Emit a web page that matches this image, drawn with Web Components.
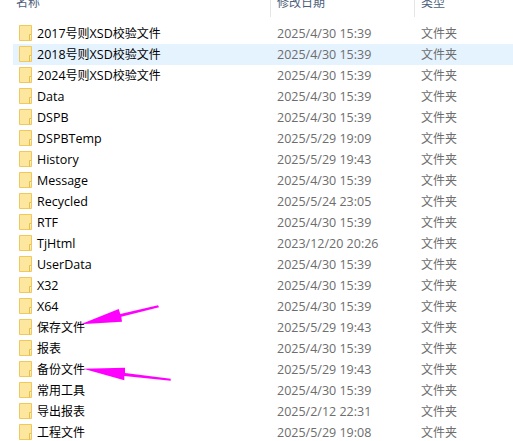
<!DOCTYPE html>
<html lang="zh">
<head>
<meta charset="utf-8">
<title>文件夹</title>
<style>
  html, body { margin: 0; padding: 0; background: #fff; overflow: hidden; }
  body { width: 513px; height: 441px; font-family: "Open Sans", "Noto Sans CJK SC", sans-serif; }
</style>
</head>
<body>
<file-list>
  <list-header></list-header>
  <folder-row name="2017号则XSD校验文件" date="2025/4/30 15:39"></folder-row>
  <folder-row name="2018号则XSD校验文件" date="2025/4/30 15:39" hot></folder-row>
  <folder-row name="2024号则XSD校验文件" date="2025/4/30 15:39"></folder-row>
  <folder-row name="Data" date="2025/4/30 15:39"></folder-row>
  <folder-row name="DSPB" date="2025/4/30 15:39"></folder-row>
  <folder-row name="DSPBTemp" date="2025/5/29 19:09"></folder-row>
  <folder-row name="History" date="2025/5/29 19:43"></folder-row>
  <folder-row name="Message" date="2025/4/30 15:39"></folder-row>
  <folder-row name="Recycled" date="2025/5/24 23:05"></folder-row>
  <folder-row name="RTF" date="2025/4/30 15:39"></folder-row>
  <folder-row name="TjHtml" date="2023/12/20 20:26"></folder-row>
  <folder-row name="UserData" date="2025/4/30 15:39"></folder-row>
  <folder-row name="X32" date="2025/4/30 15:39"></folder-row>
  <folder-row name="X64" date="2025/4/30 15:39"></folder-row>
  <folder-row name="保存文件" date="2025/5/29 19:43"></folder-row>
  <folder-row name="报表" date="2025/4/30 15:39"></folder-row>
  <folder-row name="备份文件" date="2025/5/29 19:43"></folder-row>
  <folder-row name="常用工具" date="2025/4/30 15:39"></folder-row>
  <folder-row name="导出报表" date="2025/2/12 22:31"></folder-row>
  <folder-row name="工程文件" date="2025/5/29 19:08"></folder-row>
  <arrow-marks></arrow-marks>
</file-list>

<script>
class FileList extends HTMLElement {
  constructor() {
    super();
    this.attachShadow({ mode: "open" }).innerHTML = `
      <style>
        :host { display: block; position: relative; height: 441px; overflow: hidden; }
      </style>
      <slot></slot>`;
  }
}

class ListHeader extends HTMLElement {
  constructor() {
    super();
    this.attachShadow({ mode: "open" }).innerHTML = `
      <style>
        :host {
          display: grid;
          grid-template-columns: 270px 144px 1fr;
          height: 17px;
          margin-bottom: 6px;
          overflow: hidden;
          color: #4c607a;
          font-size: 12px;
        }
        div { display: flex; align-items: flex-end; height: 17px; line-height: 16px; padding-bottom: 6px; box-sizing: border-box; padding-left: 6px; }
        div + div { border-left: 1px solid #e5e5e5; }
        .name { padding-left: 16px; }
      </style>
      <div class="name">名称</div><div>修改日期</div><div>类型</div>`;
  }
}

class FolderRow extends HTMLElement {
  constructor() {
    super();
    this.attachShadow({ mode: "open" }).innerHTML = `
      <style>
        :host {
          display: grid;
          grid-template-columns: 257px 144px 1fr;
          align-items: center;
          height: 21px;
          margin-left: 13px;
          font-size: 12px;
          line-height: 21px;
          white-space: nowrap;
        }
        :host([hot]) { background: #e5f3ff; }
        .name { display: flex; align-items: center; gap: 5px; padding-left: 6px; color: #000; }
        .date, .type { color: #6d6d6d; padding-left: 7px; }
        .date, .latin { font-size: 12.5px; }
        svg { display: block; flex: none; margin-top: -1px; }
      </style>
      <div class="name">
        <svg width="13" height="16" viewBox="0 0 13 16">
          <path d="M.5.500h12v15H.5z" fill="#fde79f" stroke="#f0c95c"/>
          <path d="M10.500 15.500v-6h2" fill="#fff3c8" stroke="#e6bd50"/>
        </svg>
        <span id="name"></span>
      </div>
      <div class="date" id="date"></div>
      <div class="type">文件夹</div>`;
  }
  connectedCallback() {
    const nameEl = this.shadowRoot.querySelector("#name");
    // latin runs are a touch bigger than the CJK ones
    this.getAttribute("name").split(/([\x00-\x7f]+)/).forEach((part) => {
      if (!part) return;
      const span = document.createElement("span");
      if (/^[\x00-\x7f]/.test(part)) span.className = "latin";
      span.textContent = part;
      nameEl.appendChild(span);
    });
    this.shadowRoot.querySelector("#date").textContent = this.getAttribute("date");
  }
}

// magenta arrows drawn over the list
class ArrowMarks extends HTMLElement {
  constructor() {
    super();
    this.attachShadow({ mode: "open" }).innerHTML = `
      <style>
        :host { position: absolute; inset: 0; pointer-events: none; }
        svg { display: block; }
      </style>
      <svg width="513" height="441" viewBox="0 0 513 441">
        <path d="M80.700 324.300 118.700 309 120.300 314 158 305.300 159 307.300 121.300 316.700 122 321.700Z" fill="#ff00ff"/>
        <path d="M83.300 368.700 125 367.700 125 373 170.700 378.700 170.700 380.700 124.300 376 124.300 380.300Z" fill="#ff00ff"/>
      </svg>`;
  }
}

customElements.define("file-list", FileList);
customElements.define("list-header", ListHeader);
customElements.define("folder-row", FolderRow);
customElements.define("arrow-marks", ArrowMarks);
</script>
</body>
</html>
